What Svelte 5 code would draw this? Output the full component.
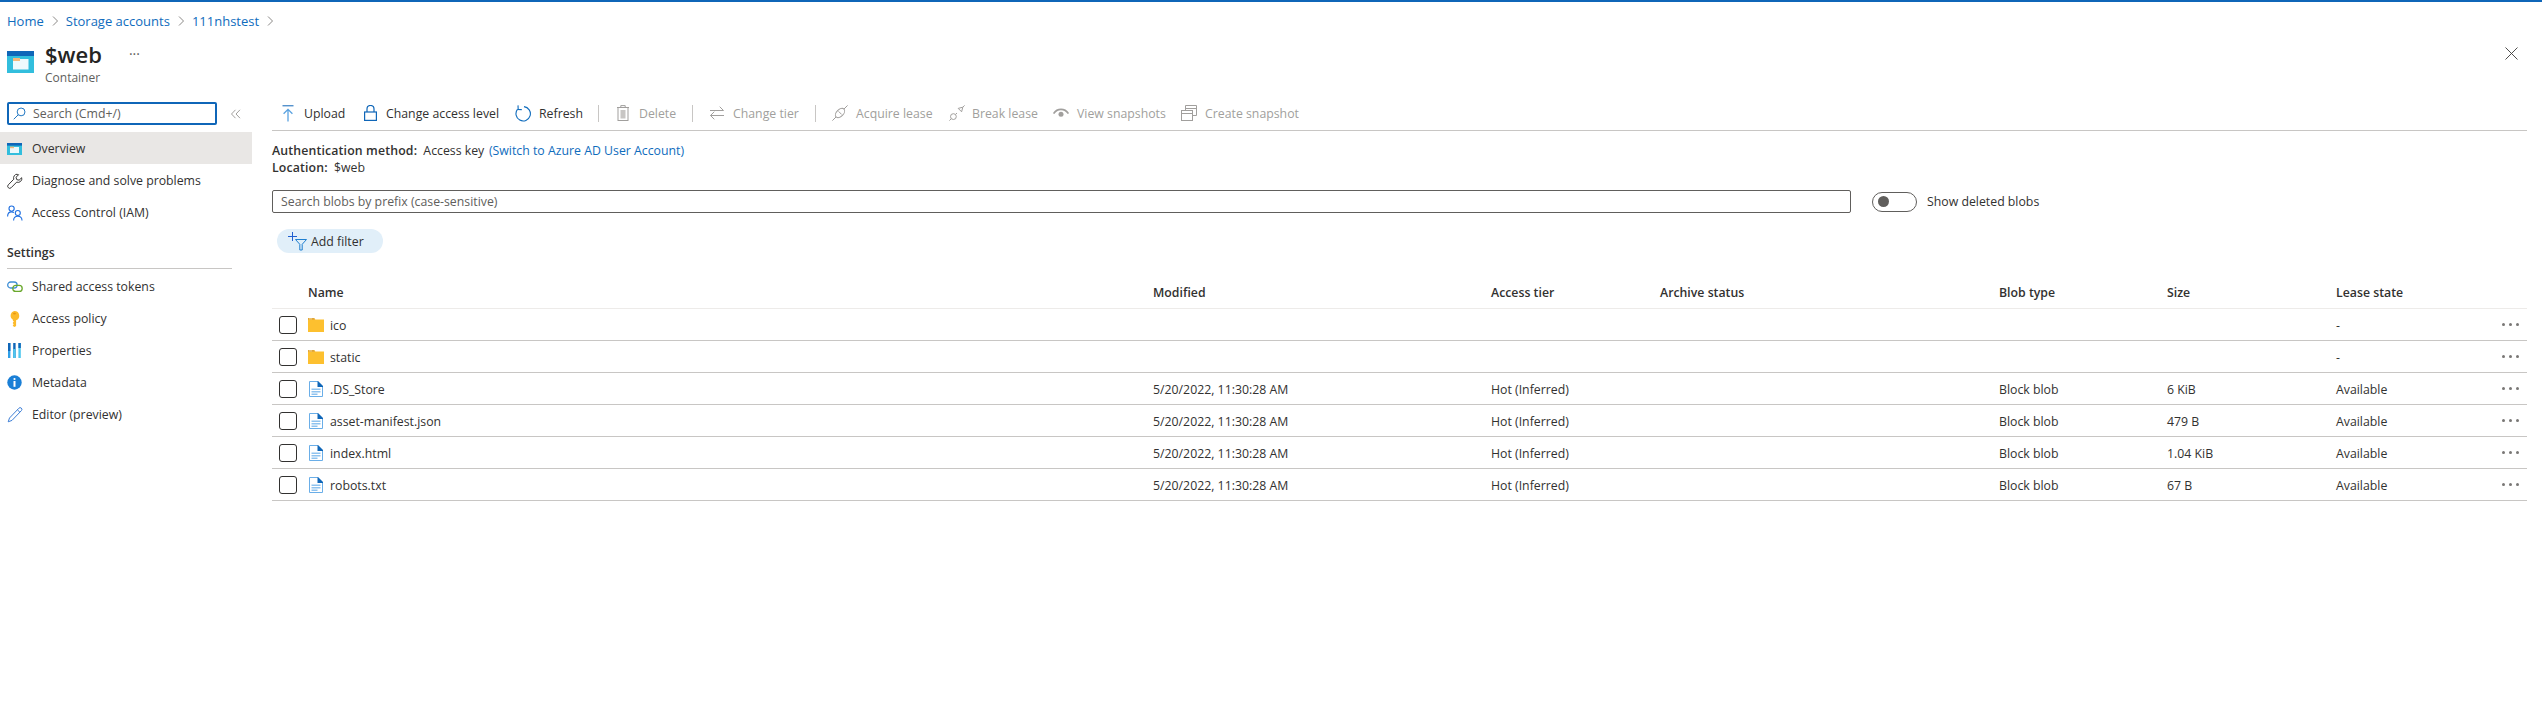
<script>
  const rows = [
    { name: 'ico', folder: true, lease: '-' },
    { name: 'static', folder: true, lease: '-' },
    { name: '.DS_Store', size: '6 KiB' },
    { name: 'asset-manifest.json', size: '479 B' },
    { name: 'index.html', size: '1.04 KiB' },
    { name: 'robots.txt', size: '67 B' }
  ];
  const headers = ['Name', 'Modified', 'Access tier', 'Archive status', 'Blob type', 'Size', 'Lease state'];
</script>

<div class="page">
  <nav class="crumbs">
    <span class="link">Home</span>
    <svg class="chev" width="7" height="10" viewBox="0 0 7 10"><path d="M1 .5 5.5 5 1 9.5" /></svg>
    <span class="link">Storage accounts</span>
    <svg class="chev" width="7" height="10" viewBox="0 0 7 10"><path d="M1 .5 5.5 5 1 9.5" /></svg>
    <span class="link">111nhstest</span>
    <svg class="chev" width="7" height="10" viewBox="0 0 7 10"><path d="M1 .5 5.5 5 1 9.5" /></svg>
  </nav>

  <header class="head">
    <div class="head-icon">
      <svg width="27" height="22" viewBox="0 0 27 22">
        <rect width="27" height="22" fill="#32bedd" />
        <rect width="27" height="5" fill="#0f66b8" />
        <rect x="6" y="8" width="15.5" height="10.5" fill="#fff" opacity=".92" />
        <rect x="6" y="7" width="7" height="3" fill="#f5b87a" />
      </svg>
    </div>
    <div class="titles">
      <div class="title-row">
        <h1>$web</h1>
        <span class="more">···</span>
      </div>
      <div class="sub">Container</div>
    </div>
    <svg class="close" width="13" height="13" viewBox="0 0 13 13"><path d="M.5.5l12 12M12.5.5l-12 12" /></svg>
  </header>

  <div class="body">
    <aside class="side">
      <div class="side-search-row">
        <div class="side-search">
          <svg width="13" height="13" viewBox="0 0 14 14" fill="none" stroke="#0f6cbd"><circle cx="8.7" cy="5.3" r="4.2" /><path d="M5.6 8.4.8 13.2" /></svg>
          <span>Search (Cmd+/)</span>
        </div>
        <svg class="collapse" width="10" height="10" viewBox="0 0 10 10" fill="none" stroke="#a19f9d"><path d="M4.5.8.5 5l4 4.2M9 .8 5 5l4 4.2" /></svg>
      </div>

      <div class="nav-item active">
        <span class="ni">
          <svg width="15" height="12" viewBox="0 0 15 12"><rect width="15" height="12" fill="#32bedd" /><rect width="15" height="2.6" fill="#0f66b8" /><rect x="3" y="4" width="9" height="6" fill="#fff" opacity=".9" /><rect x="3" y="3.6" width="4" height="1.6" fill="#f5b87a" /></svg>
        </span>Overview
      </div>
      <div class="nav-item">
        <span class="ni">
          <svg width="16" height="16" viewBox="0 0 16 16" fill="none" stroke="#3b3a39" stroke-width="1"><path d="M10.2 1.2a3.7 3.7 0 0 0-3.4 5L1.3 11.8a2 2 0 0 0 2.9 2.9l5.5-5.6a3.7 3.7 0 0 0 5-4.4l-2.6 2.5-2.4-.6-.6-2.4 2.5-2.5a3.7 3.7 0 0 0-1.4 0z" /></svg>
        </span>Diagnose and solve problems
      </div>
      <div class="nav-item">
        <span class="ni">
          <svg width="16" height="16" viewBox="0 0 16 16" fill="none" stroke="#1f6fe0" stroke-width="1.1"><circle cx="4.6" cy="3.6" r="2.6" /><path d="M.6 11.5c0-3 1.6-4.6 4-4.6 1 0 1.7.2 2.3.7" /><circle cx="10.8" cy="8" r="2.5" /><path d="M6.6 15.4c0-2.6 1.7-4.2 4.2-4.2s4.2 1.6 4.2 4.2" /></svg>
        </span>Access Control (IAM)
      </div>

      <div class="nav-group">Settings</div>

      <div class="nav-item">
        <span class="ni">
          <svg width="16" height="12" viewBox="0 0 16 12" fill="none" stroke-width="1.3"><rect x=".7" y="1" width="9.4" height="6" rx="3" stroke="#3f8fd6" /><rect x="5.8" y="4.4" width="9.4" height="6" rx="3" stroke="#6aa82d" /></svg>
        </span>Shared access tokens
      </div>
      <div class="nav-item">
        <span class="ni ni-key">
          <svg width="11" height="16" viewBox="0 0 11 16"><path d="M5.5 0a4.8 4.8 0 0 1 1.6 9.3V15l-1.6 1-1.6-1v-1l1-.8-1-.8v-1l1-.8-1-.8v-1A4.8 4.8 0 0 1 5.5 0z" fill="#fcba2a" /><ellipse cx="5.5" cy="2.6" rx="1.5" ry=".9" fill="#e9960f" /></svg>
        </span>Access policy
      </div>
      <div class="nav-item">
        <span class="ni ni-prop">
          <svg width="13" height="15" viewBox="0 0 13 15"><rect width="2.4" height="15" fill="#2f9fe8" /><rect width="2.4" height="8" fill="#0f66b8" /><rect x="5.2" width="2.4" height="15" fill="#0f66b8" /><rect x="5.2" y="6" width="2.4" height="9" fill="#50c7ee" /><rect x="10.4" width="2.4" height="15" fill="#50c7ee" /><rect x="10.4" width="2.4" height="5" fill="#0f66b8" /></svg>
        </span>Properties
      </div>
      <div class="nav-item">
        <span class="ni">
          <svg width="15" height="15" viewBox="0 0 15 15"><circle cx="7.5" cy="7.5" r="7.2" fill="#1a7fd6" /><circle cx="7.5" cy="4" r="1.1" fill="#fff" /><rect x="6.5" y="6" width="2" height="5.8" fill="#fff" /></svg>
        </span>Metadata
      </div>
      <div class="nav-item">
        <span class="ni">
          <svg width="16" height="16" viewBox="0 0 16 16" fill="none" stroke="#3f7fd6" stroke-width="1"><path d="M11.8 1.3a1.7 1.7 0 0 1 2.7 2.2L5 13.4l-3.8 1.4L2.5 11z" /><path d="M10.4 2.8 13 5.4" /></svg>
        </span>Editor (preview)
      </div>
    </aside>

    <main class="main">
      <div class="toolbar">
        <div class="tb w-upload">
          <svg width="12" height="17" viewBox="0 0 12 17" fill="none"><path d="M.5.8h11" stroke="#0f66b8" /><path d="M6 16.5V4.5M1.6 8.8 6 4.4l4.4 4.4" stroke="#5aa2e0" stroke-width="1.3" /></svg>
          <span>Upload</span>
        </div>
        <div class="tb w-access">
          <svg width="13" height="16" viewBox="0 0 13 16" fill="none" stroke="#0f66b8" stroke-width="1.2"><rect x=".6" y="7" width="11.8" height="8.4" /><path d="M3 7V4a3.5 3.5 0 0 1 7 0v3" /></svg>
          <span>Change access level</span>
        </div>
        <div class="tb w-refresh">
          <svg width="16" height="17" viewBox="0 0 16 17" fill="none" stroke="#0f6cbd" stroke-width="1.1"><path d="M9 1.6A7.2 7.2 0 1 1 2.6 4.2" /><path d="M3 .4 3.2 4.4 6.8 4.6" /></svg>
          <span>Refresh</span>
        </div>
        <i class="sep"></i>
        <div class="tb off w-delete">
          <svg width="12" height="16" viewBox="0 0 12 16" fill="none" stroke="#a19f9d"><path d="M0 2.5h12M3.8 2.5V.6h4.4v1.9" /><rect x="1" y="2.5" width="10" height="13" /><rect x="3.5" y="5" width="5" height="8.5" fill="#c8c6c4" stroke="none" /></svg>
          <span>Delete</span>
        </div>
        <i class="sep"></i>
        <div class="tb off w-tier">
          <svg width="14" height="14" viewBox="0 0 14 14" fill="none" stroke="#a19f9d"><path d="M0 4.5h13.5M9.7.7l3.8 3.8M14 9.5H.5M4.3 5.7.5 9.5 4.3 13.3" /></svg>
          <span>Change tier</span>
        </div>
        <i class="sep"></i>
        <div class="tb off w-acquire">
          <svg width="16" height="16" viewBox="0 0 16 16" fill="none" stroke="#a19f9d"><path d="M15.6.4 12 4M.4 15.6 4 12M6.6 6.4l3 3" /><ellipse cx="8" cy="8" rx="5.6" ry="3.4" transform="rotate(-45 8 8)" /></svg>
          <span>Acquire lease</span>
        </div>
        <div class="tb off w-break">
          <svg width="16" height="16" viewBox="0 0 16 16" fill="none" stroke="#a19f9d"><path d="M15.6.4 13.8 2.2M.4 15.6 2.2 13.8M9.2 3.4l3.4 3.4 1.2-4.6z" /><circle cx="4.4" cy="11.6" r="2.9" /><path d="M6.6 9.4 8 8" /></svg>
          <span>Break lease</span>
        </div>
        <div class="tb off w-view">
          <svg width="16" height="10" viewBox="0 0 16 10" fill="none"><path d="M.6 5.6C2.4 2.8 5 1.4 8 1.4s5.6 1.4 7.4 4.2" stroke="#a19f9d" stroke-width="1.7" /><circle cx="8" cy="6.2" r="2.5" fill="#a19f9d" /></svg>
          <span>View snapshots</span>
        </div>
        <div class="tb off w-create">
          <svg width="16" height="16" viewBox="0 0 16 16" fill="none" stroke="#a19f9d"><rect x=".5" y="5.5" width="11" height="10" /><path d="M.5 8.5h11M4.5 5.5V.5h11v10h-4M4.5 3.5h11" /></svg>
          <span>Create snapshot</span>
        </div>
      </div>

      <div class="meta">
        <div><b>Authentication method:</b> Access key <span class="link switch">(Switch to Azure AD User Account)</span></div>
        <div><b>Location:</b> $web</div>
      </div>

      <div class="search-row">
        <div class="prefix">Search blobs by prefix (case-sensitive)</div>
        <div class="toggle"><i></i></div>
        <span class="toggle-label">Show deleted blobs</span>
      </div>

      <div class="pill">
        <svg width="19" height="20" viewBox="0 0 19 20" fill="none" stroke="#1f5fd0" stroke-width="1"><path d="M0 5.5h9M4.5 1v9" /><path d="M7.5 8.5h11l-4.3 4.8v5.7h-2.4v-5.7z" stroke="#1f7fd0" /></svg>
        <span>Add filter</span>
      </div>

      <div class="table">
        <div class="tr th">
          <div></div>
          {#each headers as h}<div>{h}</div>{/each}
          <div></div>
        </div>
        {#each rows as r}
          <div class="tr">
            <div class="cb"><i></i></div>
            <div class="name">
              {#if r.folder}
                <svg width="16" height="14" viewBox="0 0 16 14"><path d="M0 1.2C0 .5.5 0 1.2 0h4.6l1.6 1.6H16V14H0z" fill="#fdc02f" /><path d="M0 0h6.5v1.8H0z" fill="#e0a63a" /><rect x="1" y=".5" width="3" height=".8" fill="#f7dfa8" /></svg>
              {:else}
                <svg width="14" height="16" viewBox="0 0 14 16"><path d="M.5.5H8.6L13.5 5.4V15.5H.5z" fill="#fff" stroke="#6aaee8" /><path d="M8.5 0H9L14 5v1H8.5z" fill="#0f66b8" /><path d="M2.5 7.5h9v1.6h-9zM2.5 10h9v1.6h-9zM2.5 12.4h6v1.6h-6z" fill="#8fc3ef" /></svg>
              {/if}
              <span>{r.name}</span>
            </div>
            <div>{r.folder ? '' : '5/20/2022, 11:30:28 AM'}</div>
            <div>{r.folder ? '' : 'Hot (Inferred)'}</div>
            <div></div>
            <div>{r.folder ? '' : 'Block blob'}</div>
            <div>{r.size ?? ''}</div>
            <div>{r.lease ?? 'Available'}</div>
            <div class="dots"><i></i><i></i><i></i></div>
          </div>
        {/each}
      </div>
    </main>
  </div>
</div>

<style>
  :global(body) {
    margin: 0;
    background: #fff;
  }
  .page {
    height: 715px;
    box-sizing: border-box;
    border-top: 2px solid #0f66b8;
    font-family: "Open Sans", "Noto Sans", sans-serif;
    font-size: 12.3px;
    color: #323130;
    overflow: hidden;
  }
  .link { color: #0f6cbd; }
  .switch { margin-left: 1.5px; }
  .crumbs {
    height: 36px;
    padding: 1px 0 0 7px;
    box-sizing: border-box;
    display: flex;
    align-items: center;
    font-size: 13px;
  }
  .chev { margin: 0 7px 0 8px; flex: none; }
  .chev path { fill: none; stroke: #8a8886; stroke-width: 1; }
  .head {
    height: 58px;
    padding-left: 7px;
    display: flex;
    position: relative;
  }
  .head-icon { padding-top: 13px; width: 38px; flex: none; }
  .head-icon svg { display: block; }
  .titles { display: flex; flex-direction: column; }
  .title-row { display: flex; align-items: center; height: 32px; }
  h1 {
    margin: 0;
    font-size: 22px;
    font-weight: 600;
    line-height: 32px;
    color: #252423;
  }
  .more { margin-left: 27px; color: #605e5c; font-size: 14px; line-height: 14px; margin-top: 0; }
  .sub { font-size: 12px; color: #605e5c; line-height: 16px; }
  .close { position: absolute; right: 24px; top: 9px; }
  .close path { fill: none; stroke: #3b3a39; stroke-width: .9; }
  .body { display: flex; }
  .side { width: 252px; flex: none; padding-top: 6px; }
  .side-search-row { display: flex; align-items: center; height: 23px; padding-left: 7px; margin-bottom: 7px; }
  .side-search {
    width: 210px;
    height: 23px;
    box-sizing: border-box;
    border: 2px solid #0f66b8;
    border-radius: 2px;
    display: flex;
    align-items: center;
    padding-left: 4px;
    gap: 7px;
    color: #605e5c;
  }
  .collapse { margin-left: 14px; }
  .nav-item {
    height: 32px;
    padding-top: 1px;
    box-sizing: border-box;
    display: flex;
    align-items: center;
  }
  .nav-item.active { background: #e9e7e5; }
  .ni { width: 25px; padding-left: 7px; flex: none; display: flex; align-items: center; }
  .ni-key { padding-left: 9px; width: 23px; }
  .ni-prop { padding-left: 8px; width: 24px; }
  .nav-group {
    margin: 0 20px 1px 7px;
    height: 41px;
    box-sizing: border-box;
    border-bottom: 1px solid #c8c6c4;
    font-weight: 600;
    padding-top: 16px;
    line-height: 17px;
  }
  .main { width: 2255px; margin-left: 20px; flex: none; }
  .toolbar {
    height: 35px;
    box-sizing: border-box;
    border-bottom: 1px solid #c8c6c4;
    display: flex;
    align-items: center;
    padding-left: 10px;
  }
  .tb { display: flex; align-items: center; flex: none; }
  .tb svg { flex: none; }
  .tb.off { color: #a19f9d; }
  .sep { width: 1px; height: 17px; background: #c8c6c4; flex: none; }
  .w-upload { width: 82px; gap: 10px; }
  .w-access { width: 151px; gap: 9px; }
  .w-refresh { width: 83px; gap: 8px; }
  .w-delete { width: 75px; gap: 10px; margin-left: 18px; }
  .w-tier { width: 105px; gap: 9px; margin-left: 17px; }
  .w-acquire { width: 117px; gap: 8px; margin-left: 16px; }
  .w-break { width: 104px; gap: 7px; }
  .w-view { width: 128px; gap: 8px; }
  .w-create { gap: 8px; }
  .meta { padding-top: 11px; line-height: 17px; }
  .meta b { font-weight: 600; margin-right: 3px; letter-spacing: .15px; }
  .search-row { display: flex; align-items: center; margin-top: 14px; }
  .prefix {
    width: 1579px;
    height: 23px;
    box-sizing: border-box;
    border: 1px solid #605e5c;
    border-radius: 2px;
    padding-left: 8px;
    line-height: 21px;
    color: #605e5c;
    flex: none;
  }
  .toggle {
    width: 45px;
    height: 20px;
    box-sizing: border-box;
    border: 1px solid #605e5c;
    border-radius: 10px;
    margin-left: 21px;
    display: flex;
    align-items: center;
    padding-left: 5px;
    flex: none;
  }
  .toggle i { width: 11px; height: 11px; border-radius: 50%; background: #605e5c; }
  .toggle-label { margin-left: 10px; }
  .pill {
    width: 106px;
    height: 24px;
    margin: 16px 0 0 5px;
    border-radius: 12px;
    background: #e1eff9;
    display: flex;
    align-items: center;
    padding-left: 11px;
    box-sizing: border-box;
    gap: 4px;
  }
  .table { margin-top: 23px; }
  .tr {
    display: grid;
    grid-template-columns: 36px 845px 338px 169px 339px 168px 169px 166px 25px;
    height: 32px;
    padding-top: 1px;
    align-items: center;
    border-bottom: 1px solid #c8c6c4;
    box-sizing: border-box;
  }
  .th {
    height: 33px;
    border-bottom-color: #edebe9;
    font-weight: 600;
  }
  .cb { padding-left: 7px; display: flex; }
  .cb i {
    width: 18px;
    height: 18px;
    box-sizing: border-box;
    border: 1px solid #323130;
    border-radius: 3px;
  }
  .name { display: flex; align-items: center; gap: 6px; }
  .name svg { width: 16px; flex: none; }
  .dots { display: flex; gap: 4px; padding-bottom: 2px; }
  .dots i { width: 3px; height: 3px; border-radius: 50%; background: #797775; }
</style>
